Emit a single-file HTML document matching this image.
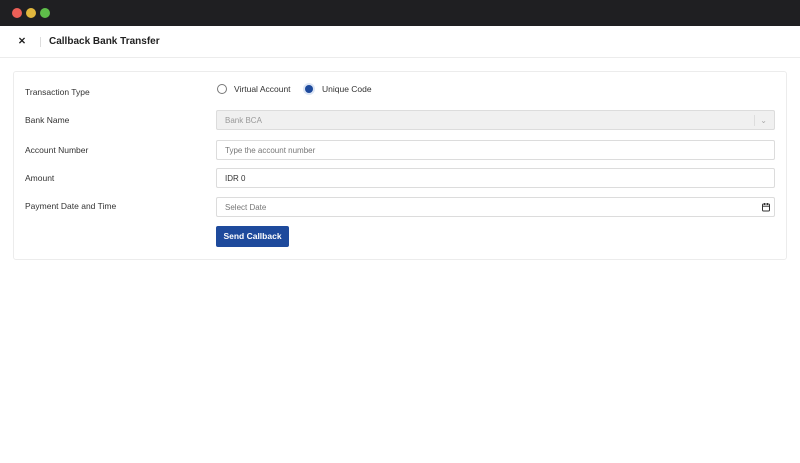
<!DOCTYPE html>
<html><head><style>
*{box-sizing:border-box;margin:0;padding:0}
body{width:800px;height:463px;background:#fff;font-family:"Liberation Sans",sans-serif;position:relative;overflow:hidden;color:#222}
.tb{position:absolute;left:0;top:0;width:800px;height:26px;background:#1f1f22}
.dot{position:absolute;top:8px;width:10px;height:10px;border-radius:50%}
.hd{position:absolute;top:26px;left:0;width:800px;height:32px;border-bottom:1px solid #ececec}
.card{position:absolute;left:13px;top:71px;width:774px;height:189px;border:1px solid #ececec;border-radius:3px}
.lbl{position:absolute;left:25px;font-size:8.5px;color:#333}
.inp{position:absolute;left:216px;width:559px;height:20px;border:1px solid #dcdcdc;border-radius:2px;font-size:8px;padding-left:8px;line-height:19px;color:#777}
</style></head><body>
<div class="tb"><div class="dot" style="left:12px;background:#ec5f57"></div><div class="dot" style="left:26px;background:#e2b83d"></div><div class="dot" style="left:40px;background:#5fbf4a"></div></div>
<div class="hd">
<div style="position:absolute;left:18px;top:10px;font-size:9.5px;font-weight:bold">✕</div>
<div style="position:absolute;left:40px;top:11px;width:1px;height:10px;background:#ddd"></div>
<div style="position:absolute;left:49px;top:10px;font-size:10px;font-weight:bold;color:#222">Callback Bank Transfer</div>
</div>
<div class="card"></div>
<div class="lbl" style="top:87px">Transaction Type</div>
<div class="lbl" style="top:115px">Bank Name</div>
<div class="lbl" style="top:145px">Account Number</div>
<div class="lbl" style="top:173px">Amount</div>
<div class="lbl" style="top:201px">Payment Date and Time</div>
<div style="position:absolute;left:217px;top:84px;width:10px;height:10px;border:1px solid #777;border-radius:50%"></div>
<div style="position:absolute;left:234px;top:84px;font-size:8.5px;color:#333">Virtual Account</div>
<div style="position:absolute;left:305px;top:85px;width:8px;height:8px;border-radius:50%;background:#1e4a9c;box-shadow:0 0 0 2px #dde6f5"></div>
<div style="position:absolute;left:322px;top:84px;font-size:8.5px;color:#333">Unique Code</div>
<div class="inp" style="top:110px;background:#f0f0f0;color:#999">Bank BCA<span style="position:absolute;right:19px;top:4px;width:1px;height:11px;background:#ddd"></span><span style="position:absolute;right:7px;top:0;color:#aaa;font-size:8px">⌄</span></div>
<div class="inp" style="top:140px">Type the account number</div>
<div class="inp" style="top:168px;color:#333">IDR 0</div>
<div class="inp" style="top:197px">Select Date
<svg style="position:absolute;right:3px;top:4px" width="10" height="10" viewBox="0 0 10 10"><rect x="1.5" y="2" width="7" height="7" rx="1" fill="none" stroke="#333" stroke-width="1"/><line x1="1.5" y1="4.2" x2="8.5" y2="4.2" stroke="#333"/><line x1="3.5" y1="1" x2="3.5" y2="3" stroke="#333"/><line x1="6.5" y1="1" x2="6.5" y2="3" stroke="#333"/></svg></div>
<div style="position:absolute;left:216px;top:226px;width:73px;height:21px;background:#1e4a9c;border-radius:2px;color:#fff;font-size:8.5px;font-weight:bold;text-align:center;line-height:21px">Send Callback</div>
</body></html>
